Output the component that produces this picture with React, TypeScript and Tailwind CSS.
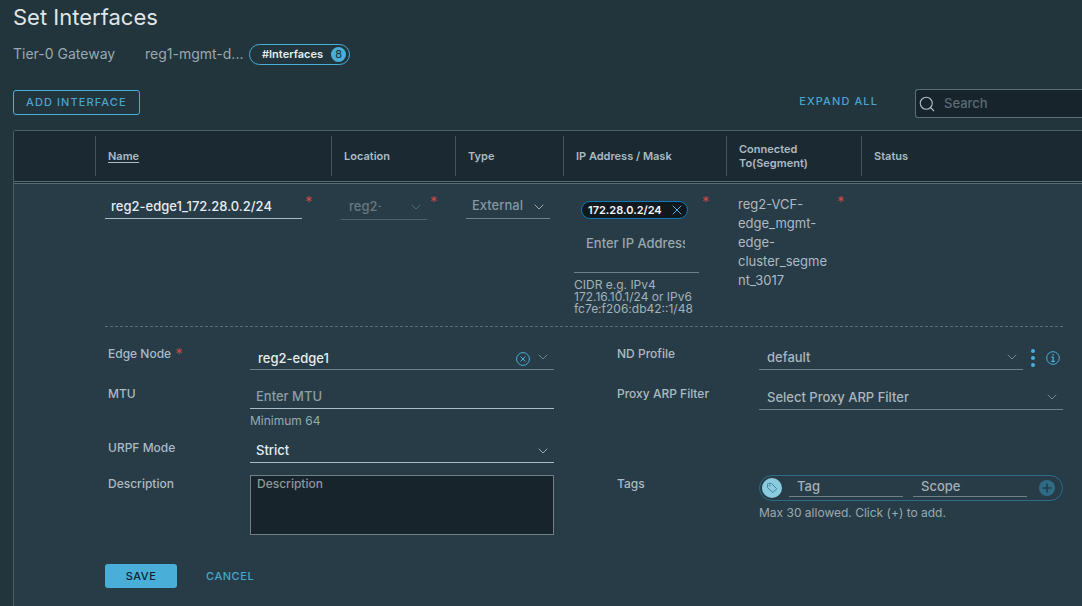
import type { ReactNode } from 'react'
import { ChevronDown, Search, X } from 'lucide-react'
import clsx from 'clsx'

const columns = [
  { label: 'Name', sorted: true },
  { label: 'Location' },
  { label: 'Type' },
  { label: 'IP Address / Mask' },
  { label: 'Connected To(Segment)' },
  { label: 'Status' },
]

function Required() {
  return <span className="text-[15px] leading-4 text-[#c24a48]">*</span>
}

function Chevron({ className }: { className: string }) {
  return (
    <ChevronDown
      aria-hidden
      strokeWidth={1.5}
      className={clsx('pointer-events-none absolute right-[3px] size-4', className)}
    />
  )
}

function FieldLabel({ htmlFor, required, children }: { htmlFor: string; required?: boolean; children: ReactNode }) {
  return (
    <div className="flex w-[145px] shrink-0 items-center gap-1 pl-[3px]">
      <label htmlFor={htmlFor} className="text-xs font-medium leading-6 text-[#acbac3]">
        {children}
      </label>
      {required && <Required />}
    </div>
  )
}

function FormRow({ children }: { children: ReactNode }) {
  return <div className="flex items-start">{children}</div>
}

function TagIcon() {
  return (
    <span className="flex size-5 shrink-0 items-center justify-center rounded-full bg-[#89cbdf]">
      <svg viewBox="0 0 12 12" className="size-3" fill="none" stroke="#4b8497">
        <path d="M1.5 2.5 a1 1 0 0 1 1-1 H5.5 L10.7 6.7 L7 10.6 L1.5 5.6 Z" strokeLinejoin="round" />
        <circle cx="3.6" cy="3.6" r="0.5" />
      </svg>
    </span>
  )
}

function DetailForm() {
  return (
    <form className="pt-[15px]" onSubmit={(e) => e.preventDefault()}>
      <div className="grid grid-cols-2 grid-rows-[40px_54px_36px_auto] gap-x-[60px]">
        <FormRow>
          <FieldLabel htmlFor="edge-node" required>Edge Node</FieldLabel>
          <div className="relative flex-1">
            <input
              id="edge-node"
              defaultValue="reg2-edge1"
              className="block h-7 w-full border-b border-[#707f87] pl-2 pr-12 pt-1 text-[13px] font-medium text-[#e6edf0] outline-none"
            />
            <button type="button" aria-label="Clear edge node" className="absolute right-6 top-2.5 text-[#4aaed9]">
              <svg viewBox="0 0 14 14" className="size-3.5" fill="none" stroke="currentColor">
                <circle cx="7" cy="7" r="6.4" />
                <path d="M4.5 4.5l5 5M9.5 4.5l-5 5" />
              </svg>
            </button>
            <Chevron className="top-[7px] text-[#74848c]" />
          </div>
        </FormRow>

        <FormRow>
          <FieldLabel htmlFor="nd-profile">ND Profile</FieldLabel>
          <div className="relative flex-1">
            <select
              id="nd-profile"
              className="block h-7 w-full appearance-none border-b border-[#707f87] pl-2 pt-1 text-[13px] font-medium text-[#a9b6bd] outline-none"
            >
              <option>default</option>
            </select>
            <Chevron className="top-[7px] text-[#74848c]" />
          </div>
          <div className="flex w-10 items-center justify-between pl-2 pr-[3px] pt-[7px]">
            <button type="button" aria-label="ND profile actions" className="text-[#4aaed9]">
              <svg viewBox="0 0 4 18" className="h-[18px] w-1" fill="currentColor">
                <circle cx="2" cy="2" r="2" />
                <circle cx="2" cy="9" r="2" />
                <circle cx="2" cy="16" r="2" />
              </svg>
            </button>
            <button type="button" aria-label="ND profile info" className="text-[#4aaed9]">
              <svg viewBox="0 0 14 14" className="size-3.5" fill="none" stroke="currentColor">
                <circle cx="7" cy="7" r="6.3" />
                <path d="M7.1 3v1.6M5.4 6.2h1.7v4M5.2 10.3h3.8" strokeWidth="1.2" />
              </svg>
            </button>
          </div>
        </FormRow>

        <FormRow>
          <FieldLabel htmlFor="mtu">MTU</FieldLabel>
          <div className="flex-1">
            <input
              id="mtu"
              placeholder="Enter MTU"
              className="block h-[27px] w-full border-b border-[#acbac3] pl-1.5 pt-0.5 text-[13px] font-medium outline-none placeholder:text-[#8f9da4]"
            />
            <p className="text-xs leading-6 text-[#9aa9b1]">Minimum 64</p>
          </div>
        </FormRow>

        <FormRow>
          <FieldLabel htmlFor="proxy-arp">Proxy ARP Filter</FieldLabel>
          <div className="relative flex-1">
            <select
              id="proxy-arp"
              className="block h-7 w-full appearance-none border-b border-[#707f87] pl-2 pt-1 text-[13px] font-medium text-[#a9b6bd] outline-none"
            >
              <option>Select Proxy ARP Filter</option>
            </select>
            <Chevron className="top-[7px] text-[#74848c]" />
          </div>
        </FormRow>

        <FormRow>
          <FieldLabel htmlFor="urpf">URPF Mode</FieldLabel>
          <div className="relative flex-1">
            <select
              id="urpf"
              className="block h-[27px] w-full appearance-none border-b border-[#acbac3] pl-1.5 pt-1 text-[13px] font-medium text-[#e6edf0] outline-none"
            >
              <option>Strict</option>
              <option>None</option>
            </select>
            <Chevron className="top-[7px] text-[#a3a9ab]" />
          </div>
        </FormRow>

        <div />

        <FormRow>
          <FieldLabel htmlFor="description">Description</FieldLabel>
          <textarea
            id="description"
            placeholder="Description"
            className="mt-[3px] h-15 flex-1 resize-none border border-[#717e85] bg-[#18242b] px-1.5 text-xs font-medium text-[#acbac3] outline-none placeholder:text-[#8d979c]"
          />
        </FormRow>

        <FormRow>
          <FieldLabel htmlFor="tag">Tags</FieldLabel>
          <div className="flex-1 pt-[3px]">
            <div className="flex h-[26px] items-center rounded-full border border-[#2f6b87] pl-0.5 pr-[7px]">
              <TagIcon />
              <input
                id="tag"
                placeholder="Tag"
                className="ml-[7px] h-[18px] w-0 flex-1 border-b border-[#707f87] pb-0.5 pl-2 text-[13px] font-medium outline-none placeholder:text-[#a3afb6]"
              />
              <input
                aria-label="Scope"
                placeholder="Scope"
                className="ml-2.5 mr-3 h-[18px] w-0 flex-1 border-b border-[#707f87] pb-0.5 pl-2 text-[13px] font-medium outline-none placeholder:text-[#a3afb6]"
              />
              <button type="button" aria-label="Add tag" className="size-4 rounded-full bg-[#2f6b87]">
                <svg viewBox="0 0 16 16" className="size-4" fill="none" stroke="#273c47" strokeWidth="1.6">
                  <path d="M8 3.5v9M3.5 8h9" />
                </svg>
              </button>
            </div>
            <p className="text-xs leading-6 text-[#9aa9b1]">Max 30 allowed. Click (+) to add.</p>
          </div>
        </FormRow>
      </div>

      <div className="flex items-center gap-[29px] pb-5 pt-[29px] text-[11px] font-medium tracking-wider">
        <button type="submit" className="h-6 w-18 rounded-[3px] bg-[#49afd9] text-[#10222b]">
          SAVE
        </button>
        <button type="button" className="text-[#49a5cc]">
          CANCEL
        </button>
      </div>
    </form>
  )
}

export default function App() {
  return (
    <main className="flex min-h-screen flex-col overflow-hidden bg-[#22343c] pl-[13px] font-[Inter,sans-serif] text-[#acbac3]">
      <h1 className="text-[22px] leading-[34px] text-[#dfe5e8]">Set Interfaces</h1>

      <div className="mt-2 flex h-6 items-center text-sm text-[#9aa8b0]">
        <span className="w-[132px]">Tier-0 Gateway</span>
        <span className="w-[104px] whitespace-nowrap">reg1-mgmt-d...</span>
        <div className="flex h-[21px] items-center gap-2 rounded-full border border-[#49afd9] pl-3 pr-[3px] text-[11px] leading-[14px]">
          <span className="font-semibold text-[#e6edf0]">#Interfaces</span>
          <span className="size-[15px] rounded-full bg-[#49afd9] text-center text-[#1b2a32]">8</span>
        </div>
      </div>

      {/* Toolbar */}
      <div className="mt-[23px] flex h-[29px] items-start">
        <button className="mt-px h-[25px] rounded-[3px] border border-[#49afd9] px-3 text-[11px] font-medium tracking-widest text-[#49a5cc]">
          ADD INTERFACE
        </button>
        <button className="ml-auto mr-[37px] h-6 text-[11px] font-medium tracking-widest text-[#49a5cc]">
          EXPAND ALL
        </button>
        <label className="flex h-[29px] w-[167px] items-center gap-2 rounded-l-[3px] border border-r-0 border-[#5c6e78] bg-[#18242b] pl-0.5">
          <Search aria-hidden strokeWidth={1.5} className="size-[18px] shrink-0 text-[#acbac3]" />
          <input
            aria-label="Search"
            placeholder="Search"
            className="w-full text-[13px] font-medium outline-none placeholder:text-[#5c6b73]"
          />
        </label>
      </div>

      {/* Interfaces grid */}
      <div className="mt-3 flex-1 rounded-tl-[3px] border-l border-t border-[#4b5e68] bg-[#283c47]">
        <table className="w-full table-fixed border-separate border-spacing-0 text-left">
          <colgroup>
            <col className="w-[81px]" />
            <col className="w-[236px]" />
            <col className="w-[124px]" />
            <col className="w-[108px]" />
            <col className="w-[163px]" />
            <col className="w-[135px]" />
            <col />
          </colgroup>
          <thead className="bg-[#1b2a32]">
            <tr>
              <td className="border-b-3 border-double border-[#566a74]" />
              {columns.map((column) => (
                <th key={column.label} scope="col" className="h-[53px] border-b-3 border-double border-[#566a74] p-0">
                  <div className="flex h-10 items-center border-l border-[#44555f] pl-3 pr-6 text-[11px] font-semibold leading-[14px]">
                    <span className={clsx(column.sorted && 'underline underline-offset-2')}>{column.label}</span>
                  </div>
                </th>
              ))}
            </tr>
          </thead>
          <tbody>
            <tr className="h-[142px] align-top">
              <td />
              <td className="p-0 pl-2.5 pt-2.5">
                <div className="flex gap-[3px]">
                  <input
                    aria-label="Name"
                    defaultValue="reg2-edge1_172.28.0.2/24"
                    className="h-[25px] w-[197px] border-b border-[#acbac3] pl-1.5 text-[13px] font-medium text-[#e6edf0] outline-none"
                  />
                  <Required />
                </div>
              </td>
              <td className="p-0 pl-2.5 pt-2.5">
                <div className="flex gap-[3px]">
                  <div className="relative flex h-[26px] w-[86px] border-b border-[#4f626c]">
                    <input
                      aria-label="Location"
                      disabled
                      defaultValue="reg2-"
                      className="ml-2 w-8 text-[13px] font-medium text-[#667880]"
                    />
                    <Chevron className="top-[5px] text-[#56686f]" />
                  </div>
                  <Required />
                </div>
              </td>
              <td className="p-0 pl-[11px] pt-2.5">
                <div className="relative w-[84px]">
                  <select
                    aria-label="Type"
                    className="block h-[25px] w-full appearance-none border-b border-[#707f87] pl-1.5 text-[13px] font-medium text-[#8796a0] outline-none"
                  >
                    <option>External</option>
                    <option>Service</option>
                  </select>
                  <Chevron className="top-[5px] text-[#a3a9ab]" />
                </div>
              </td>
              <td className="p-0 pl-[11px] pt-2.5">
                <div className="flex gap-[3px]">
                  <div className="w-[125px] pt-[7px]">
                    <span className="ml-[7px] flex h-[18px] w-[107px] items-center justify-between rounded-full border border-[#0f78b5] bg-[#10181e] pl-1.5 pr-0.5 text-[11px] font-semibold text-[#f3f6f8]">
                      172.28.0.2/24
                      <button aria-label="Remove 172.28.0.2/24" className="text-[#49afd9]">
                        <X strokeWidth={1.5} className="size-4" />
                      </button>
                    </span>
                    <div className="border-b border-[#707f87] pb-[19px] pl-3 pr-3.5 pt-3.5">
                      <input
                        aria-label="IP Address / Mask"
                        placeholder="Enter IP Address"
                        className="block h-5 w-full text-[13px] font-medium outline-none placeholder:text-[#9aa7ae]"
                      />
                    </div>
                    <p className="pt-1.5 text-xs leading-3 text-[#a3b1b9]">
                      CIDR e.g. IPv4 172.16.10.1/24 or IPv6 fc7e:f206:db42::1/48
                    </p>
                  </div>
                  <Required />
                </div>
              </td>
              <td className="p-0 pl-3 pt-2.5">
                <div className="flex gap-[3px]">
                  <span className="w-24 pt-px text-[13px] leading-[19px] wrap-anywhere">
                    reg2-VCF-edge_mgmt-edge-cluster_segment_3017
                  </span>
                  <Required />
                </div>
              </td>
              <td />
            </tr>
            <tr>
              <td />
              <td colSpan={6} className="p-0 pl-2.5 pr-[19px]">
                <div className="border-t border-dashed border-[#5a6d77]">
                  <DetailForm />
                </div>
              </td>
            </tr>
          </tbody>
        </table>
      </div>
    </main>
  )
}
